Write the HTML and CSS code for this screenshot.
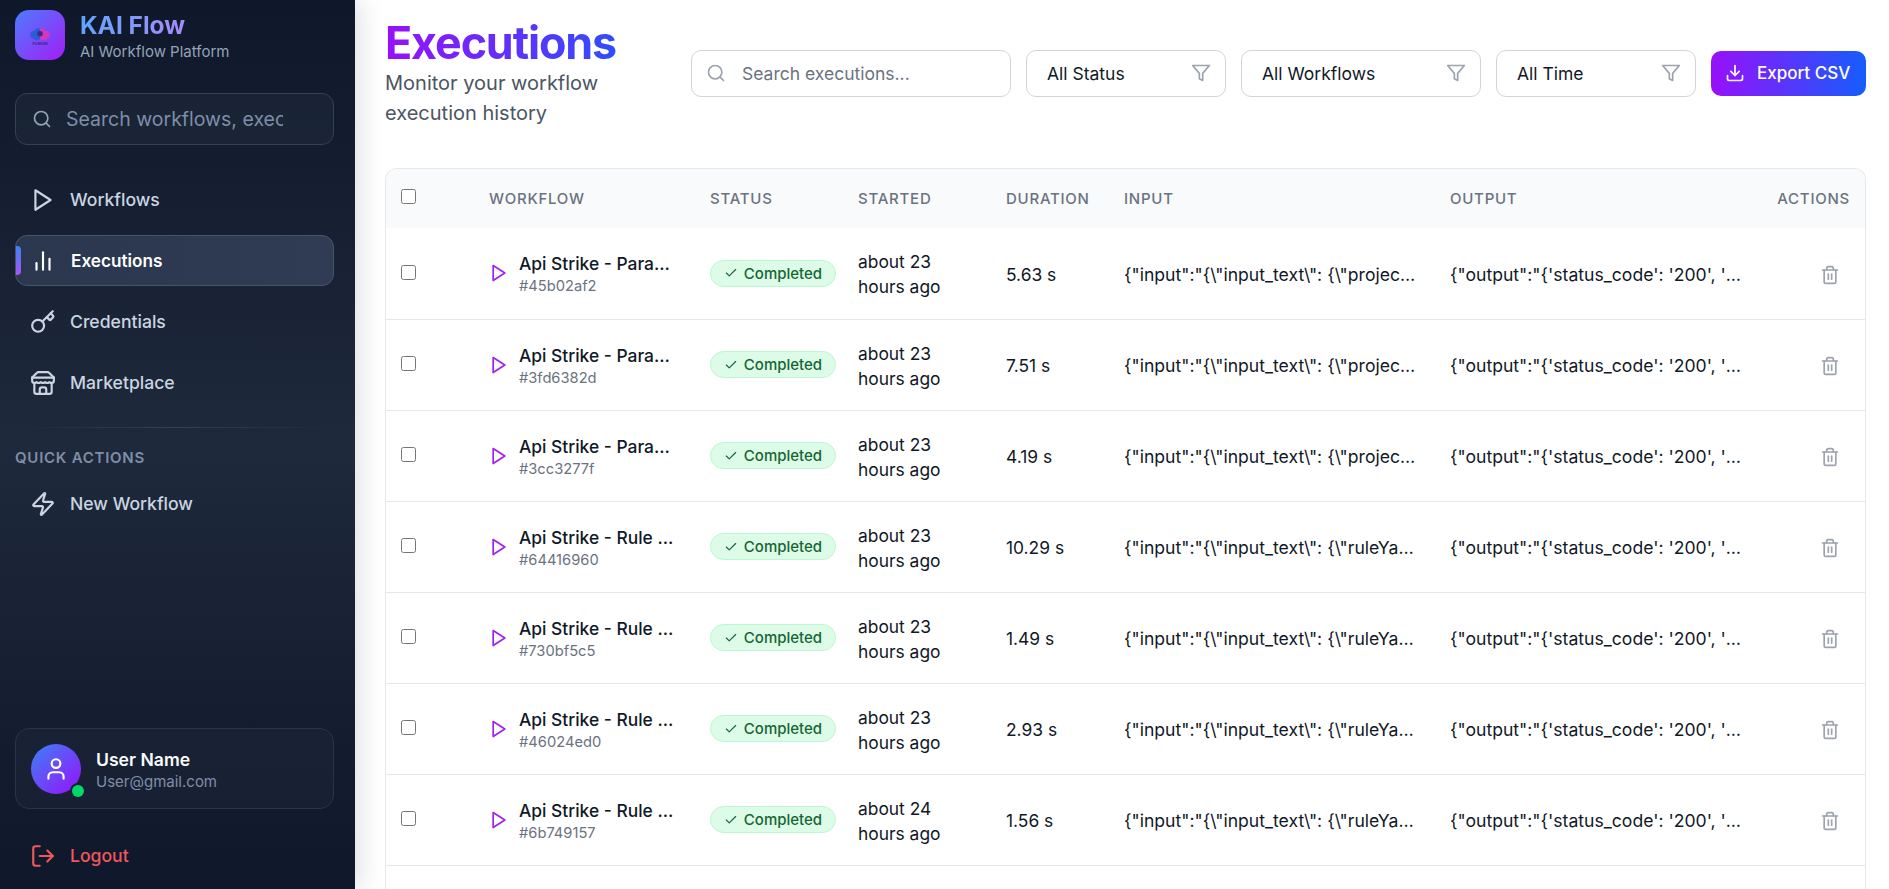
FILE: index.html
```html
<!DOCTYPE html>
<html lang="en">
<head>
<meta charset="utf-8">
<title>KAI Flow - Executions</title>
<link rel="stylesheet" href="styles.css">
</head>
<body>
<svg class="sprite" aria-hidden="true">
  <symbol id="i-play" viewBox="0 0 24 24"><polygon points="5 3 19 12 5 21 5 3"/></symbol>
  <symbol id="i-search" viewBox="0 0 24 24"><circle cx="11" cy="11" r="8"/><path d="m21 21-4.3-4.3"/></symbol>
  <symbol id="i-bars" viewBox="0 0 24 24"><path d="M18 20V10"/><path d="M12 20V4"/><path d="M6 20v-6"/></symbol>
  <symbol id="i-key" viewBox="0 0 24 24"><path d="m15.5 7.5 2.3 2.3a1 1 0 0 0 1.4 0l2.1-2.1a1 1 0 0 0 0-1.4L19 4"/><path d="m21 2-9.6 9.6"/><circle cx="7.5" cy="15.5" r="5.5"/></symbol>
  <symbol id="i-store" viewBox="0 0 24 24"><path d="m2 7 4.41-4.41A2 2 0 0 1 7.83 2h8.34a2 2 0 0 1 1.42.59L22 7"/><path d="M4 12v8a2 2 0 0 0 2 2h12a2 2 0 0 0 2-2v-8"/><path d="M15 22v-4a2 2 0 0 0-2-2h-2a2 2 0 0 0-2 2v4"/><path d="M2 7h20"/><path d="M22 7v3a2 2 0 0 1-2 2a2.7 2.7 0 0 1-1.59-.63.7.7 0 0 0-.82 0A2.7 2.7 0 0 1 16 12a2.7 2.7 0 0 1-1.59-.63.7.7 0 0 0-.82 0A2.7 2.7 0 0 1 12 12a2.7 2.7 0 0 1-1.59-.63.7.7 0 0 0-.82 0A2.7 2.7 0 0 1 8 12a2.7 2.7 0 0 1-1.59-.63.7.7 0 0 0-.82 0A2.7 2.7 0 0 1 4 12a2 2 0 0 1-2-2V7"/></symbol>
  <symbol id="i-zap" viewBox="0 0 24 24"><path d="M4 14a1 1 0 0 1-.78-1.63l9.9-10.2a.5.5 0 0 1 .86.46l-1.92 6.02A1 1 0 0 0 13 10h7a1 1 0 0 1 .78 1.63l-9.9 10.2a.5.5 0 0 1-.86-.46l1.92-6.02A1 1 0 0 0 11 14z"/></symbol>
  <symbol id="i-user" viewBox="0 0 24 24"><path d="M19 21v-2a4 4 0 0 0-4-4H9a4 4 0 0 0-4 4v2"/><circle cx="12" cy="7" r="4"/></symbol>
  <symbol id="i-logout" viewBox="0 0 24 24"><path d="M9 21H5a2 2 0 0 1-2-2V5a2 2 0 0 1 2-2h4"/><polyline points="16 17 21 12 16 7"/><line x1="21" y1="12" x2="9" y2="12"/></symbol>
  <symbol id="i-filter" viewBox="0 0 24 24"><polygon points="22 3 2 3 10 12.46 10 19 14 21 14 12.46 22 3"/></symbol>
  <symbol id="i-download" viewBox="0 0 24 24"><path d="M21 15v4a2 2 0 0 1-2 2H5a2 2 0 0 1-2-2v-4"/><polyline points="7 10 12 15 17 10"/><line x1="12" y1="15" x2="12" y2="3"/></symbol>
  <symbol id="i-check" viewBox="0 0 24 24"><path d="M20 6 9 17l-5-5"/></symbol>
  <symbol id="i-trash" viewBox="0 0 24 24"><path d="M3 6h18"/><path d="M19 6v14a2 2 0 0 1-2 2H7a2 2 0 0 1-2-2V6"/><path d="M8 6V4a2 2 0 0 1 2-2h4a2 2 0 0 1 2 2v2"/><line x1="10" y1="11" x2="10" y2="17"/><line x1="14" y1="11" x2="14" y2="17"/></symbol>
</svg>

<div class="app">
  <aside class="sidebar">
    <div class="brand">
      <div class="logo">
        <svg class="logo-mark" viewBox="0 0 24 20">
          <path class="lobe-blue" d="M12 1.500C9 .5 6.500 2 6 4 3.500 3.500 1 5 2 7.500c-1.500 1.500-.5 4 2 4.500 1 2 5 2.500 8 1z"/>
          <path class="lobe-pink" d="M12 1.500c3-1 5.500.5 6 2.500 2.500-.5 5 1 4 3.500 1.500 1.500.5 4-2 4.500-1 2-5 2.500-8 1z"/>
          <circle class="lobe-core" cx="12" cy="7" r="3"/>
          <text class="logo-text" x="12" y="19.500" text-anchor="middle">FUSION</text>
        </svg>
      </div>
      <div class="brand-copy">
        <div class="brand-name">KAI Flow</div>
        <div class="brand-tag">AI Workflow Platform</div>
      </div>
    </div>

    <label class="side-search">
      <svg class="ic ic-20"><use href="#i-search"/></svg>
      <input class="side-search-input" type="text" placeholder="Search workflows, executions...">
    </label>

    <nav class="nav">
      <a class="nav-item"><svg class="ic ic-26"><use href="#i-play"/></svg><span>Workflows</span></a>
      <a class="nav-item active"><svg class="ic ic-26"><use href="#i-bars"/></svg><span>Executions</span></a>
      <a class="nav-item"><svg class="ic ic-26"><use href="#i-key"/></svg><span>Credentials</span></a>
      <a class="nav-item"><svg class="ic ic-26"><use href="#i-store"/></svg><span>Marketplace</span></a>
    </nav>

    <div class="side-divider"></div>
    <div class="side-heading">QUICK ACTIONS</div>
    <a class="nav-item"><svg class="ic ic-26"><use href="#i-zap"/></svg><span>New Workflow</span></a>

    <div class="user-card">
      <div class="avatar"><svg class="ic ic-26"><use href="#i-user"/></svg><span class="online"></span></div>
      <div class="user-copy">
        <div class="user-name">User Name</div>
        <div class="user-mail">User@gmail.com</div>
      </div>
    </div>
    <a class="nav-item logout"><svg class="ic ic-26"><use href="#i-logout"/></svg><span>Logout</span></a>
  </aside>

  <main class="main">
    <header class="page-head">
      <div class="title-block">
        <h1 class="title">Executions</h1>
        <p class="subtitle">Monitor your workflow execution history</p>
      </div>
      <div class="controls">
        <label class="search">
          <svg class="ic ic-20"><use href="#i-search"/></svg>
          <input class="search-input" type="text" placeholder="Search executions...">
        </label>
        <div class="select select-md"><span>All Status</span><svg class="ic ic-20"><use href="#i-filter"/></svg></div>
        <div class="select select-lg"><span>All Workflows</span><svg class="ic ic-20"><use href="#i-filter"/></svg></div>
        <div class="select select-md"><span>All Time</span><svg class="ic ic-20"><use href="#i-filter"/></svg></div>
        <button class="export"><svg class="ic ic-20"><use href="#i-download"/></svg>Export CSV</button>
      </div>
    </header>

    <section class="card">
      <table class="table">
        <colgroup>
          <col class="c-check"><col class="c-flow"><col class="c-status"><col class="c-start"><col class="c-dur"><col class="c-io"><col class="c-io"><col class="c-act">
        </colgroup>
        <thead>
          <tr>
            <th><input class="check" type="checkbox"></th>
            <th>Workflow</th><th>Status</th><th>Started</th><th>Duration</th><th>Input</th><th>Output</th><th class="right">Actions</th>
          </tr>
        </thead>
        <tbody>
          <tr>
            <td><input class="check" type="checkbox"></td>
            <td><div class="flow"><svg class="ic ic-20 play"><use href="#i-play"/></svg><div class="flow-text"><div class="flow-name">Api Strike - Parameter Testing</div><div class="flow-id">#45b02af2</div></div></div></td>
            <td><span class="badge"><svg class="ic ic-14"><use href="#i-check"/></svg>Completed</span></td>
            <td>about 23<br>hours ago</td>
            <td>5.63 s</td>
            <td><div class="clip">{"input":"{\"input_text\": {\"project_id\": \"api-strike\"}}"}</div></td>
            <td><div class="clip">{"output":"{'status_code': '200', 'message': 'ok'}"}</div></td>
            <td class="right"><button class="trash"><svg class="ic ic-20"><use href="#i-trash"/></svg></button></td>
          </tr>
          <tr>
            <td><input class="check" type="checkbox"></td>
            <td><div class="flow"><svg class="ic ic-20 play"><use href="#i-play"/></svg><div class="flow-text"><div class="flow-name">Api Strike - Parameter Testing</div><div class="flow-id">#3fd6382d</div></div></div></td>
            <td><span class="badge"><svg class="ic ic-14"><use href="#i-check"/></svg>Completed</span></td>
            <td>about 23<br>hours ago</td>
            <td>7.51 s</td>
            <td><div class="clip">{"input":"{\"input_text\": {\"project_id\": \"api-strike\"}}"}</div></td>
            <td><div class="clip">{"output":"{'status_code': '200', 'message': 'ok'}"}</div></td>
            <td class="right"><button class="trash"><svg class="ic ic-20"><use href="#i-trash"/></svg></button></td>
          </tr>
          <tr>
            <td><input class="check" type="checkbox"></td>
            <td><div class="flow"><svg class="ic ic-20 play"><use href="#i-play"/></svg><div class="flow-text"><div class="flow-name">Api Strike - Parameter Testing</div><div class="flow-id">#3cc3277f</div></div></div></td>
            <td><span class="badge"><svg class="ic ic-14"><use href="#i-check"/></svg>Completed</span></td>
            <td>about 23<br>hours ago</td>
            <td>4.19 s</td>
            <td><div class="clip">{"input":"{\"input_text\": {\"project_id\": \"api-strike\"}}"}</div></td>
            <td><div class="clip">{"output":"{'status_code': '200', 'message': 'ok'}"}</div></td>
            <td class="right"><button class="trash"><svg class="ic ic-20"><use href="#i-trash"/></svg></button></td>
          </tr>
          <tr>
            <td><input class="check" type="checkbox"></td>
            <td><div class="flow"><svg class="ic ic-20 play"><use href="#i-play"/></svg><div class="flow-text"><div class="flow-name">Api Strike - Rule Generation</div><div class="flow-id">#64416960</div></div></div></td>
            <td><span class="badge"><svg class="ic ic-14"><use href="#i-check"/></svg>Completed</span></td>
            <td>about 23<br>hours ago</td>
            <td>10.29 s</td>
            <td><div class="clip">{"input":"{\"input_text\": {\"ruleYaml\": \"rules.yaml\"}}"}</div></td>
            <td><div class="clip">{"output":"{'status_code': '200', 'message': 'ok'}"}</div></td>
            <td class="right"><button class="trash"><svg class="ic ic-20"><use href="#i-trash"/></svg></button></td>
          </tr>
          <tr>
            <td><input class="check" type="checkbox"></td>
            <td><div class="flow"><svg class="ic ic-20 play"><use href="#i-play"/></svg><div class="flow-text"><div class="flow-name">Api Strike - Rule Generation</div><div class="flow-id">#730bf5c5</div></div></div></td>
            <td><span class="badge"><svg class="ic ic-14"><use href="#i-check"/></svg>Completed</span></td>
            <td>about 23<br>hours ago</td>
            <td>1.49 s</td>
            <td><div class="clip">{"input":"{\"input_text\": {\"ruleYaml\": \"rules.yaml\"}}"}</div></td>
            <td><div class="clip">{"output":"{'status_code': '200', 'message': 'ok'}"}</div></td>
            <td class="right"><button class="trash"><svg class="ic ic-20"><use href="#i-trash"/></svg></button></td>
          </tr>
          <tr>
            <td><input class="check" type="checkbox"></td>
            <td><div class="flow"><svg class="ic ic-20 play"><use href="#i-play"/></svg><div class="flow-text"><div class="flow-name">Api Strike - Rule Generation</div><div class="flow-id">#46024ed0</div></div></div></td>
            <td><span class="badge"><svg class="ic ic-14"><use href="#i-check"/></svg>Completed</span></td>
            <td>about 23<br>hours ago</td>
            <td>2.93 s</td>
            <td><div class="clip">{"input":"{\"input_text\": {\"ruleYaml\": \"rules.yaml\"}}"}</div></td>
            <td><div class="clip">{"output":"{'status_code': '200', 'message': 'ok'}"}</div></td>
            <td class="right"><button class="trash"><svg class="ic ic-20"><use href="#i-trash"/></svg></button></td>
          </tr>
          <tr>
            <td><input class="check" type="checkbox"></td>
            <td><div class="flow"><svg class="ic ic-20 play"><use href="#i-play"/></svg><div class="flow-text"><div class="flow-name">Api Strike - Rule Generation</div><div class="flow-id">#6b749157</div></div></div></td>
            <td><span class="badge"><svg class="ic ic-14"><use href="#i-check"/></svg>Completed</span></td>
            <td>about 24<br>hours ago</td>
            <td>1.56 s</td>
            <td><div class="clip">{"input":"{\"input_text\": {\"ruleYaml\": \"rules.yaml\"}}"}</div></td>
            <td><div class="clip">{"output":"{'status_code': '200', 'message': 'ok'}"}</div></td>
            <td class="right"><button class="trash"><svg class="ic ic-20"><use href="#i-trash"/></svg></button></td>
          </tr>
        </tbody>
      </table>
    </section>
  </main>
</div>
</body>
</html>
```

FILE: styles.css
```css
* { box-sizing: border-box; }
html, body { height: 100%; margin: 0; }
body {
  font-family: Inter, "Liberation Sans", sans-serif;
  font-size: 17.4px;
  color: #111827;
  background: #fff;
  overflow: hidden;
}
.sprite { display: none; }
.ic {
  flex: none;
  fill: none;
  stroke: currentColor;
  stroke-width: 2;
  stroke-linecap: round;
  stroke-linejoin: round;
}
.ic-14 { width: 14px; height: 14px; }
.ic-20 { width: 20px; height: 20px; }
.ic-26 { width: 26px; height: 26px; }

.app { display: flex; height: 100vh; }

/* Sidebar */
.sidebar {
  position: relative;
  z-index: 1;
  flex: none;
  width: 355px;
  display: flex;
  flex-direction: column;
  padding: 10px 21px 8px 15px;
  background: linear-gradient(180deg, #0f172a 0%, #1e293b 50%, #0f172a 100%);
  box-shadow: 4px 0 24px rgba(15, 23, 42, 0.14);
}
.brand { display: flex; align-items: center; gap: 15px; height: 50px; }
.logo {
  flex: none;
  width: 50px;
  height: 50px;
  border-radius: 14px;
  background: linear-gradient(135deg, #4a7dff, #a51cf5);
  display: flex;
  align-items: center;
  justify-content: center;
}
.logo-mark { width: 22px; height: 19px; margin-top: 3px; overflow: visible; }
.lobe-blue { fill: #2b5bd7; }
.lobe-pink { fill: #d238b8; }
.lobe-core { fill: #3a2a8c; }
.logo-text { font-size: 4.4px; font-weight: 700; fill: #4b1c9c; }
.brand-copy { margin-top: 2px; }
.brand-name {
  font-size: 24.5px;
  line-height: 32px;
  font-weight: 700;
  width: fit-content;
  background: linear-gradient(90deg, #60a5fa, #a78bfa);
  -webkit-background-clip: text;
  background-clip: text;
  color: transparent;
}
.brand-tag { font-size: 15px; line-height: 22px; color: #94a3b8; }

.side-search {
  display: flex;
  align-items: center;
  gap: 14px;
  height: 52px;
  margin-top: 33px;
  padding: 0 50px 0 16px;
  border: 1px solid #334155;
  border-radius: 12px;
  background: rgba(30, 41, 59, 0.6);
  color: #94a3b8;
}
.side-search-input {
  flex: 1;
  min-width: 0;
  border: 0;
  outline: 0;
  padding: 0;
  background: transparent;
  font: 400 19.5px Inter, sans-serif;
  color: #e2e8f0;
}
.side-search-input::placeholder { color: #7f8ea8; opacity: 1; }

.nav { display: flex; flex-direction: column; gap: 10px; margin-top: 29px; }
.nav-item {
  position: relative;
  display: flex;
  align-items: center;
  gap: 14px;
  height: 51px;
  padding: 0 14px;
  border: 1px solid transparent;
  border-radius: 12px;
  color: #cbd5e1;
  font-size: 17.6px;
  font-weight: 500;
}
.nav-item.active {
  gap: 15px;
  color: #fff;
  font-size: 17.2px;
  font-weight: 600;
  background: linear-gradient(90deg, #2a374e, #2f3c54);
  border-color: #475569;
}
.nav-item.active::before {
  content: "";
  position: absolute;
  left: 0;
  top: 10px;
  bottom: 10px;
  width: 5px;
  border-radius: 0 4px 4px 0;
  background: linear-gradient(180deg, #3b82f6, #a855f7);
}
.side-divider {
  height: 1px;
  margin-top: 19px;
  background: linear-gradient(90deg, transparent, #334155, transparent);
}
.side-heading {
  margin: 21px 0 11px;
  font-size: 15px;
  line-height: 18px;
  font-weight: 600;
  letter-spacing: 0.05em;
  color: #7f8ea8;
}
.user-card {
  display: flex;
  align-items: center;
  gap: 15px;
  height: 81px;
  margin-top: auto;
  padding: 0 15px;
  border: 1px solid #27344a;
  border-radius: 14px;
  background: rgba(30, 41, 59, 0.45);
}
.avatar {
  position: relative;
  flex: none;
  width: 50px;
  height: 50px;
  border-radius: 50%;
  background: linear-gradient(135deg, #3b82f6, #9810fa);
  color: #fff;
  display: flex;
  align-items: center;
  justify-content: center;
}
.online {
  position: absolute;
  right: -3px;
  bottom: -3px;
  width: 12px;
  height: 12px;
  border-radius: 50%;
  background: #00d866;
  box-shadow: 0 0 0 2px #172136;
}
.user-copy { margin-top: 2px; }
.user-name { font-size: 17.6px; font-weight: 600; line-height: 23px; color: #f8fafc; }
.user-mail { font-size: 15px; line-height: 21px; color: #7f8ea8; }
.logout { margin-top: 21px; color: #f0575d; }

/* Main */
.main {
  flex: 1;
  min-width: 0;
  display: flex;
  flex-direction: column;
  padding: 18px 23px 0 30px;
  background: #fff;
}
.page-head { display: flex; align-items: center; gap: 16px; }
.title-block { flex: 1; min-width: 0; }
.title {
  margin: 0;
  width: 290px;
  font-size: 44.8px;
  line-height: 50px;
  font-weight: 700;
  letter-spacing: -0.025em;
  background: linear-gradient(90deg, #9810fa, #155dfc);
  -webkit-background-clip: text;
  background-clip: text;
  color: transparent;
}
.subtitle { margin: 0; font-size: 20px; line-height: 30px; color: #4b5563; }
.controls { display: flex; align-items: center; gap: 15px; flex: none; margin-top: 0; }
.search {
  display: flex;
  align-items: center;
  gap: 16px;
  width: 320px;
  height: 47px;
  padding: 0 14px;
  border: 1px solid #d1d5db;
  border-radius: 10px;
  color: #9ca3af;
}
.search-input {
  flex: 1;
  min-width: 0;
  border: 0;
  outline: 0;
  padding: 0;
  font: 400 17.5px Inter, sans-serif;
}
.search-input::placeholder { color: #6b7280; opacity: 1; }
.select {
  display: flex;
  align-items: center;
  justify-content: space-between;
  height: 47px;
  padding: 0 14px 0 20px;
  border: 1px solid #d1d5db;
  border-radius: 10px;
  color: #111827;
  font-size: 17.5px;
}
.select .ic { color: #9ca3af; }
.select-md { width: 200px; }
.select-lg { width: 240px; }
.export {
  display: flex;
  align-items: center;
  gap: 12px;
  width: 155px;
  height: 45px;
  padding: 0 14px;
  border: 0;
  border-radius: 10px;
  background: linear-gradient(90deg, #9810fa, #155dfc);
  color: #fff;
  font: 500 17px Inter, sans-serif;
  white-space: nowrap;
}

/* Table */
.card {
  flex: 1;
  min-height: 0;
  margin-top: 40px;
  border: 1px solid #e5e7eb;
  border-bottom: 0;
  border-radius: 12px 12px 0 0;
  overflow: hidden;
  background: #fff;
}
.table { width: 100%; table-layout: fixed; border-collapse: collapse; }
.c-check { width: 87px; }
.c-flow { width: 221px; }
.c-status { width: 148px; }
.c-start { width: 148px; }
.c-dur { width: 118px; }
.c-io { width: 326px; }
.c-act { width: 105px; }
.check { display: block; width: 15px; height: 15px; margin: 0 0 4px -1px; }
th {
  height: 59px;
  padding: 0 16px;
  background: #f9fafb;
  text-align: left;
  font-size: 15px;
  font-weight: 500;
  letter-spacing: 0.05em;
  text-transform: uppercase;
  color: #6b7280;
}
th.right { padding-right: 15px; }
td {
  height: 91px;
  padding: 21px 16px 19px;
  border-bottom: 1px solid #e5e7eb;
  line-height: 25px;
  color: #111827;
  vertical-align: middle;
}
td:nth-child(3) { padding: 20px 16px; }
.right { text-align: right; }
.flow { display: flex; align-items: center; gap: 10px; }
.play { color: #a020f0; margin-bottom: 2px; }
.flow-text { flex: 1; min-width: 0; }
.flow-name {
  overflow: hidden;
  white-space: nowrap;
  text-overflow: ellipsis;
  font-weight: 500;
  line-height: 24px;
}
.flow-id { font-size: 14.7px; line-height: 20px; color: #6b7280; }
.badge {
  display: inline-flex;
  align-items: center;
  justify-content: center;
  gap: 6px;
  width: 126px;
  height: 27px;
  border: 1px solid #bbf7d0;
  border-radius: 14px;
  background: #dcfce7;
  color: #166534;
  font-size: 15px;
  font-weight: 500;
  line-height: 1;
}
.clip {
  overflow: hidden;
  white-space: nowrap;
  text-overflow: ellipsis;
  font-size: 17.6px;
}
.trash {
  display: inline-flex;
  padding: 0 9px 2px 0;
  border: 0;
  background: transparent;
  color: #9ca3af;
  vertical-align: middle;
}
```
